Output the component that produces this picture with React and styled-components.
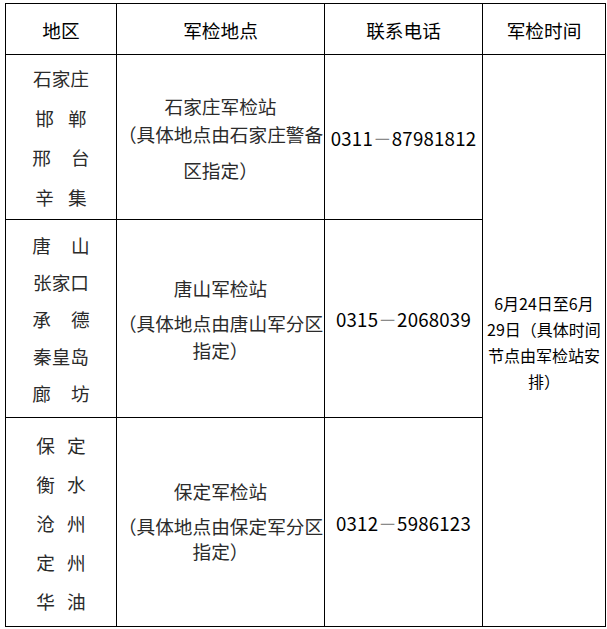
import React from 'react'
import styled, { createGlobalStyle } from 'styled-components'

const GlobalStyle = createGlobalStyle`
  body {
    margin: 0;
    background: #ffffff;
    font-family: "Noto Sans CJK SC", "Noto Sans", sans-serif;
  }
`

const Page = styled.div`
  padding: 3px 0 0 5px;
`

// black background + 1px gaps draw the table rules
const Table = styled.div`
  display: grid;
  grid-template-columns: 110px 207px 157px 122px;
  grid-template-rows: 50px 164px 197px 208px;
  gap: 1px;
  padding: 1px;
  width: fit-content;
  background: #000000;
`

const Cell = styled.div`
  display: flex;
  flex-direction: column;
  align-items: center;
  justify-content: center;
  padding-top: ${props => props.shift || 0}px;
  background: #ffffff;
  text-align: center;
  ${props => props.span && `grid-row: span ${props.span};`}
`

const HeadText = styled.span`
  font-size: 18.67px;
  color: #000000;
`

const NameList = styled.div`
  display: flex;
  flex-direction: column;
  align-items: center;
  font-size: 18.67px;
  line-height: ${props => props.lh}px;
  color: #2b2b2b;
`

const Name = styled.div`
  display: flex;
  justify-content: center;
  gap: ${props => props.gap || 0}px;
`

const Station = styled.div`
  font-size: 18.67px;
  line-height: 20px;
  color: #2b2b2b;
`

const Note = styled.div`
  width: 100%;
  margin-top: ${props => props.gap}px;
  font-size: 18.67px;
  line-height: ${props => props.lh}px;
  color: #2b2b2b;
`

const Phone = styled.span`
  font-size: 18.67px;
  color: #000000;
  letter-spacing: 0.2px;
`

const Dash = styled.span`
  color: #8a8a8a;
`

const TimeText = styled.div`
  font-size: 16px;
  line-height: 26px;
  color: #000000;
`

const headers = ['地区', '军检地点', '联系电话', '军检时间']

const regions = [
  {
    lh: 39.5,
    names: [
      { chars: ['石家庄'] },
      { chars: ['邯', '郸'], gap: 14 },
      { chars: ['邢', '台'], gap: 20 },
      { chars: ['辛', '集'], gap: 14 }
    ],
    station: '石家庄军检站',
    note: '（具体地点由石家庄警备区指定）',
    noteLh: 36,
    noteGap: 0,
    shift: 9,
    phone: ['0311', '87981812']
  },
  {
    lh: 37,
    names: [
      { chars: ['唐', '山'], gap: 20 },
      { chars: ['张家口'] },
      { chars: ['承', '德'], gap: 20 },
      { chars: ['秦皇岛'] },
      { chars: ['廊', '坊'], gap: 20 }
    ],
    station: '唐山军检站',
    note: '（具体地点由唐山军分区指定）',
    noteLh: 27,
    noteGap: 11,
    shift: 3,
    phone: ['0315', '2068039']
  },
  {
    lh: 39,
    names: [
      { chars: ['保', '定'], gap: 12 },
      { chars: ['衡', '水'], gap: 12 },
      { chars: ['沧', '州'], gap: 12 },
      { chars: ['定', '州'], gap: 12 },
      { chars: ['华', '油'], gap: 12 }
    ],
    station: '保定军检站',
    note: '（具体地点由保定军分区指定）',
    noteLh: 25,
    noteGap: 12,
    shift: 0,
    phone: ['0312', '5986123']
  }
]

export default function App() {
  return (
    <Page>
      <GlobalStyle />
      <Table>
        {headers.map(h => (
          <Cell key={h}>
            <HeadText>{h}</HeadText>
          </Cell>
        ))}
        {regions.map((r, i) => (
          <React.Fragment key={r.station}>
            <Cell>
              <NameList lh={r.lh}>
                {r.names.map((n, j) => (
                  <Name key={j} gap={n.gap}>
                    {n.chars.map(c => <span key={c}>{c}</span>)}
                  </Name>
                ))}
              </NameList>
            </Cell>
            <Cell shift={r.shift}>
              <Station>{r.station}</Station>
              <Note lh={r.noteLh} gap={r.noteGap}>{r.note}</Note>
            </Cell>
            <Cell>
              <Phone>
                {r.phone[0]}<Dash>－</Dash>{r.phone[1]}
              </Phone>
            </Cell>
            {i === 0 && (
              <Cell span={3} shift={2}>
                <TimeText>
                  6月24日至6月<br />
                  29日（具体时间<br />
                  节点由军检站安<br />
                  排）
                </TimeText>
              </Cell>
            )}
          </React.Fragment>
        ))}
      </Table>
    </Page>
  )
}
